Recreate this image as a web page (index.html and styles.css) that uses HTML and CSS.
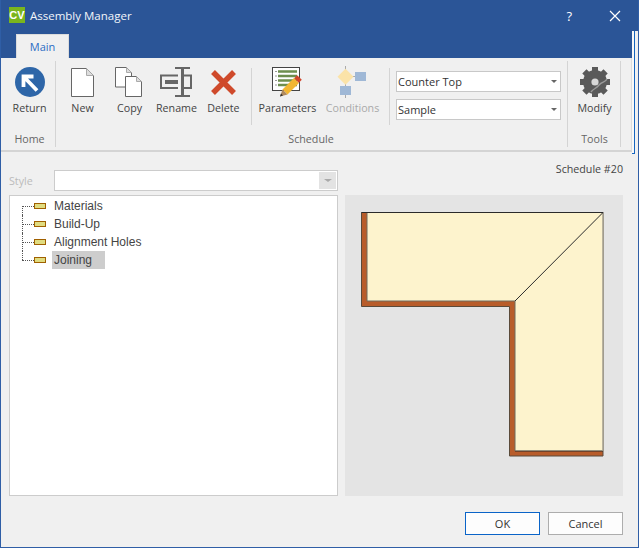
FILE: index.html
```html
<!DOCTYPE html>
<html lang="en">
<head>
<meta charset="UTF-8" />
<title>Assembly Manager</title>
<link rel="stylesheet" href="styles.css">
</head>
<body>
<div class="window">

  <div class="titlebar">
    <span class="logo">CV</span>
    <span class="title">Assembly Manager</span>
    <span class="help">?</span>
    <svg class="close" width="12" height="12" viewBox="0 0 12 12"><path d="M1 1 L11 11 M11 1 L1 11" stroke="#fff" stroke-width="1.2" fill="none"/></svg>
  </div>

  <div class="ribbon-wrap">
    <div class="ribbon-main">
      <div class="tabs"><div class="tab">Main</div></div>
      <div class="ribbon">

        <div class="group group-home">
          <div class="group-body">
            <div class="tool tool-home">
              <svg width="41" height="32" viewBox="0 0 41 32">
                <circle cx="21" cy="16" r="15" fill="#2e66a8"/>
                <path d="M24.5 10.5 H14.5 V21 M15 11 L28 24.5" stroke="#fff" stroke-width="3.8" fill="none"/>
              </svg>
              <span>Return</span>
            </div>
          </div>
          <div class="group-label">Home</div>
        </div>

        <div class="group group-schedule">
          <div class="group-body">
            <div class="tool">
              <svg width="41" height="32" viewBox="0 0 41 32">
                <path d="M9.5 2.5 H24.5 L31.5 9.5 V30.5 H9.5 Z" fill="#fff" stroke="#666"/>
                <path d="M24.5 2.5 V9.5 H31.5" fill="#ddd" stroke="#aaa"/>
              </svg>
              <span>New</span>
            </div>
            <div class="tool">
              <svg width="41" height="32" viewBox="0 0 41 32">
                <path d="M6.5 1.5 H17.5 L22.5 6.5 V21 H6.5 Z" fill="#fff" stroke="#666"/>
                <path d="M17.5 1.5 V6.5 H22.5" fill="#ddd" stroke="#aaa"/>
                <path d="M16.5 10.5 H27.5 L32.5 15.5 V30.5 H16.5 Z" fill="#fff" stroke="#666"/>
                <path d="M27.5 10.5 V15.5 H32.5" fill="#ddd" stroke="#aaa"/>
              </svg>
              <span>Copy</span>
            </div>
            <div class="tool">
              <svg width="41" height="32" viewBox="0 0 41 32">
                <path d="M22 9.5 H5 V22 H22 M28 9.5 H35 V22 H28" fill="none" stroke="#666" stroke-width="2"/>
                <path d="M9 14 H22 V18 H9 Z M19 1 H34 V3 H28 V29 H34 V31 H19 V29 H25 V3 H19 Z" fill="#666"/>
              </svg>
              <span>Rename</span>
            </div>
            <div class="tool">
              <svg width="41" height="32" viewBox="0 0 41 32">
                <path d="M10 6 L31 27 M31 6 L10 27" stroke="#cf4a2b" stroke-width="5.5" fill="none"/>
              </svg>
              <span>Delete</span>
            </div>

            <div class="sep sep-first"></div>

            <div class="tool tool-wide">
              <svg width="41" height="32" viewBox="0 0 41 32">
                <rect x="5.5" y="1.5" width="27" height="23" fill="#fff" stroke="#444"/>
                <path d="M11 5.5 H30 M11 10 H30 M11 14.5 H30 M11 19 H30" stroke="#6d8e4e" stroke-width="2.5" fill="none"/>
                <path d="M8 5.5 H10 M8 10 H10 M8 14.5 H10 M8 19 H10" stroke="#999" fill="none"/>
                <path d="M18 26 L29.5 14.5" stroke="#f2b632" stroke-width="7" fill="none"/>
                <path d="M15.5 23.5 L20.5 28.5 L13 30.5 Z" fill="#b08a5e"/>
                <path d="M13 30.5 L14 27.5 L16 29.5 Z" fill="#333"/>
                <path d="M29.5 14.5 L32.5 11.5" stroke="#d0452b" stroke-width="6.5" fill="none"/>
              </svg>
              <span>Parameters</span>
            </div>
            <div class="tool tool-wide tool-off">
              <svg width="41" height="32" viewBox="0 0 41 32">
                <path d="M13.5 0 V32 M20 10.5 H24" stroke="#aaa" fill="none"/>
                <path d="M13.5 2.7 L21.5 10.7 L13.5 18.7 L5.5 10.7 Z" fill="#fbe3a8"/>
                <rect x="23" y="6" width="11" height="9" fill="#9fb8d6"/>
                <rect x="8" y="20" width="11" height="9" fill="#9fb8d6"/>
              </svg>
              <span>Conditions</span>
            </div>

            <div class="sep sep-second"></div>

            <div class="combos">
              <div class="combo">Counter Top<i class="arrow"></i></div>
              <div class="combo">Sample<i class="arrow"></i></div>
            </div>
          </div>
          <div class="group-label label-schedule">Schedule</div>
        </div>

        <div class="group group-tools">
          <div class="group-body">
            <div class="tool tool-home">
              <svg width="41" height="32" viewBox="0 0 41 32">
                <circle cx="21" cy="16" r="12" fill="#5a5a5a"/>
                <path d="M21 1 V31 M6 16 H36 M10.4 5.4 L31.6 26.6 M31.6 5.4 L10.4 26.6" stroke="#5a5a5a" stroke-width="6" fill="none"/>
                <circle cx="21" cy="16" r="3.6" fill="#d8d8d8"/>
                <path d="M33 13 C31 17 28 15 25 19 C22 23 20 22 17 26" stroke="#9a9a9a" stroke-width="1.4" fill="none"/>
              </svg>
              <span>Modify</span>
            </div>
          </div>
          <div class="group-label">Tools</div>
        </div>

      </div>
    </div>
    <div class="ribbon-edge"><div class="edge-line"></div></div>
  </div>

  <div class="content">
    <div class="style-row">
      <span class="style-label">Style</span>
      <div class="style-combo"><span class="style-btn"><i class="arrow arrow-off"></i></span></div>
    </div>
    <div class="schedule-no">Schedule #20</div>

    <div class="tree">
      <div class="tree-row"><i class="folder"></i><span>Materials</span></div>
      <div class="tree-row"><i class="folder"></i><span>Build-Up</span></div>
      <div class="tree-row"><i class="folder"></i><span>Alignment Holes</span></div>
      <div class="tree-row tree-last"><i class="folder"></i><span class="selected">Joining</span></div>
    </div>

    <div class="preview">
      <svg width="278" height="301" viewBox="345 195 278 301">
        <path d="M361.5 212.5 H603 V456 H509.5 V306.5 H361.5 Z" fill="#b85c2a" stroke="#5a4a3a"/>
        <path d="M367 213 H603 V451 H515 V301 H367 Z" fill="#fdf3cd"/>
        <path d="M361.5 212.5 H603 M515 451 H603" stroke="#2a2a2a" fill="none"/>
        <path d="M367 213 V301 H515 V451" stroke="#6f6a5c" fill="none"/>
        <path d="M603 213 V451" stroke="#a09c8e" stroke-width="1.5" fill="none"/>
        <path d="M515 301 L603 212.5" stroke="#2a2a2a" fill="none"/>
      </svg>
    </div>
  </div>

  <div class="footer">
    <button class="btn btn-default">OK</button>
    <button class="btn">Cancel</button>
  </div>

</div>
</body>
</html>
```

FILE: styles.css
```css
:root {
  --blue: #2b5597;
  --border-blue: #2f5ea6;
  --bg: #f0f0f0;
  --line: #d4d4d4;
  --text: #444;
}
html, body {
  margin: 0;
  padding: 0;
}
body {
  background-color: var(--bg);
  color: var(--text);
  font-family: "Open Sans", "Liberation Sans", sans-serif;
  font-size: 10.7px;
}
.window {
  width: 639px;
  height: 548px;
  box-sizing: border-box;
  border-left: 1px solid var(--border-blue);
  border-right: 1px solid var(--border-blue);
  border-bottom: 1px solid var(--border-blue);
  display: flex;
  flex-direction: column;
  overflow: hidden;
}

/* title bar */
.titlebar {
  height: 31px;
  flex: none;
  background-color: var(--blue);
  display: flex;
  align-items: center;
  color: #fff;
}
.logo {
  width: 16px;
  height: 16px;
  margin-left: 8px;
  margin-top: -1px;
  background-color: #7ab51d;
  color: #fff;
  font-family: "Liberation Sans", sans-serif;
  font-weight: bold;
  font-size: 11px;
  line-height: 16px;
  text-align: center;
}
.title {
  margin-left: 5px;
  font-size: 11.5px;
  color: #f2f5fa;
}
.help {
  margin-left: auto;
  margin-right: 37px;
  font-size: 13px;
}
.close {
  margin-right: 17px;
}

/* ribbon */
.ribbon-wrap {
  display: flex;
  flex: none;
  height: 123px;
}
.ribbon-main {
  width: 631px;
  flex: none;
}
.tabs {
  height: 27px;
  background-color: var(--blue);
  box-sizing: border-box;
  padding: 3px 0 0 15px;
}
.tab {
  width: 53px;
  height: 24px;
  box-sizing: border-box;
  background-color: var(--bg);
  border: 1px solid #dcdcdc;
  border-bottom: none;
  color: #2b6cc4;
  text-align: center;
  line-height: 23px;
  font-size: 11px;
}
.ribbon {
  height: 94px;
  box-sizing: border-box;
  background-color: var(--bg);
  border-right: 1px solid #dcdcdc;
  border-bottom: 2px solid var(--line);
  display: flex;
  align-items: flex-start;
}
.ribbon-edge {
  width: 6px;
  flex: none;
  background-color: var(--bg);
}
.edge-line {
  width: 3px;
  height: 123px;
  box-sizing: border-box;
  background-color: #f8f8f8;
  border-right: 1px solid #1565c0;
  border-bottom: 1px solid #1565c0;
}
.group {
  height: 86px;
  margin-top: 3px;
  padding-top: 5px;
  box-sizing: border-box;
  border-right: 1px solid var(--line);
  display: flex;
  flex-direction: column;
}
.group-home {
  width: 55px;
  padding-left: 3px;
}
.group-schedule {
  width: 512px;
  padding-left: 3px;
}
.group-tools {
  width: 53px;
  padding-left: 1px;
}
.group-body {
  display: flex;
  align-items: flex-start;
}
.group-label {
  margin-top: auto;
  height: 16px;
  line-height: 16px;
  text-align: center;
  color: #666;
}
.label-schedule {
  padding-right: 4px;
}
.tool {
  width: 47px;
  flex: none;
  display: flex;
  flex-direction: column;
  align-items: center;
}
.tool span {
  margin-top: 2px;
  line-height: 16px;
  white-space: nowrap;
}
.tool-home {
  width: 51px;
}
.tool-wide {
  width: 65px;
}
.tool-off {
  color: #aaa;
}
.sep {
  width: 1px;
  height: 57px;
  flex: none;
  margin-top: 2px;
  background-color: var(--line);
}
.sep-first {
  margin-left: 4px;
  margin-right: 3px;
}
.sep-second {
  margin-left: 4px;
  margin-right: 6px;
}
.combos {
  display: flex;
  flex-direction: column;
  gap: 7px;
  margin-top: 5px;
}
.combo {
  width: 165px;
  height: 21px;
  box-sizing: border-box;
  border: 1px solid #c8c8c8;
  background-color: #fff;
  padding-left: 1px;
  font-size: 11px;
  line-height: 19px;
  display: flex;
  justify-content: space-between;
  align-items: center;
  color: #333;
}
.arrow {
  width: 0;
  height: 0;
  margin-right: 3px;
  border-left: 3px solid transparent;
  border-right: 3px solid transparent;
  border-top: 3px solid #666;
}
.arrow-off {
  margin-right: 0;
  border-left-width: 4px;
  border-right-width: 4px;
  border-top-color: #aaa;
}

/* dialog content */
.content {
  display: grid;
  grid-template-columns: 329px 278px;
  grid-template-rows: 43px 301px;
  column-gap: 7px;
  padding-left: 8px;
  margin-top: -2px;
  flex: none;
}
.style-row {
  display: flex;
  align-items: center;
  align-self: end;
  margin-bottom: 4px;
}
.style-label {
  width: 45px;
  color: #bbb;
}
.style-combo {
  width: 284px;
  height: 21px;
  box-sizing: border-box;
  border: 1px solid #ccc;
  background-color: #fff;
  display: flex;
  justify-content: flex-end;
  padding: 1px;
}
.style-btn {
  width: 17px;
  background-color: #e3e3e3;
  display: flex;
  align-items: center;
  justify-content: center;
}
.schedule-no {
  text-align: right;
  padding-top: 9px;
  line-height: 16px;
  color: #444;
}
.tree {
  border: 1px solid #ccc;
  background-color: #fff;
  box-sizing: border-box;
  padding-top: 1px;
  font-family: "Liberation Sans", sans-serif;
  font-size: 12px;
  color: #444;
}
.tree-row {
  height: 18px;
  display: flex;
  align-items: center;
  padding-left: 24px;
  position: relative;
}
.tree-row::before {
  content: "";
  position: absolute;
  left: 12px;
  top: 0;
  bottom: 0;
  width: 12px;
  border-left: 1px dotted #555;
}
.tree-row::after {
  content: "";
  position: absolute;
  left: 12px;
  top: 9px;
  width: 12px;
  border-top: 1px dotted #555;
}
.tree-row:first-child::before {
  top: 9px;
}
.tree-last::before {
  bottom: 9px;
}
.folder {
  width: 10px;
  height: 4px;
  flex: none;
  border: 1px solid #a06000;
  background-color: #e0dc80;
}
.tree-row span {
  margin-left: 6px;
  padding: 0 2px;
  line-height: 18px;
}
.selected {
  background-color: #cdcdcd;
  width: 49px;
}
.preview {
  background-color: #e4e4e4;
}
.preview svg {
  display: block;
}

/* buttons */
.footer {
  display: flex;
  justify-content: flex-end;
  gap: 8px;
  margin-top: 16px;
  padding-right: 15px;
}
.btn {
  width: 75px;
  height: 23px;
  box-sizing: border-box;
  border: 1px solid #adadad;
  background-color: #fdfdfd;
  color: #333;
  font-family: inherit;
  font-size: 11px;
  padding: 0;
}
.btn-default {
  border-color: #0a64c8;
}
```
